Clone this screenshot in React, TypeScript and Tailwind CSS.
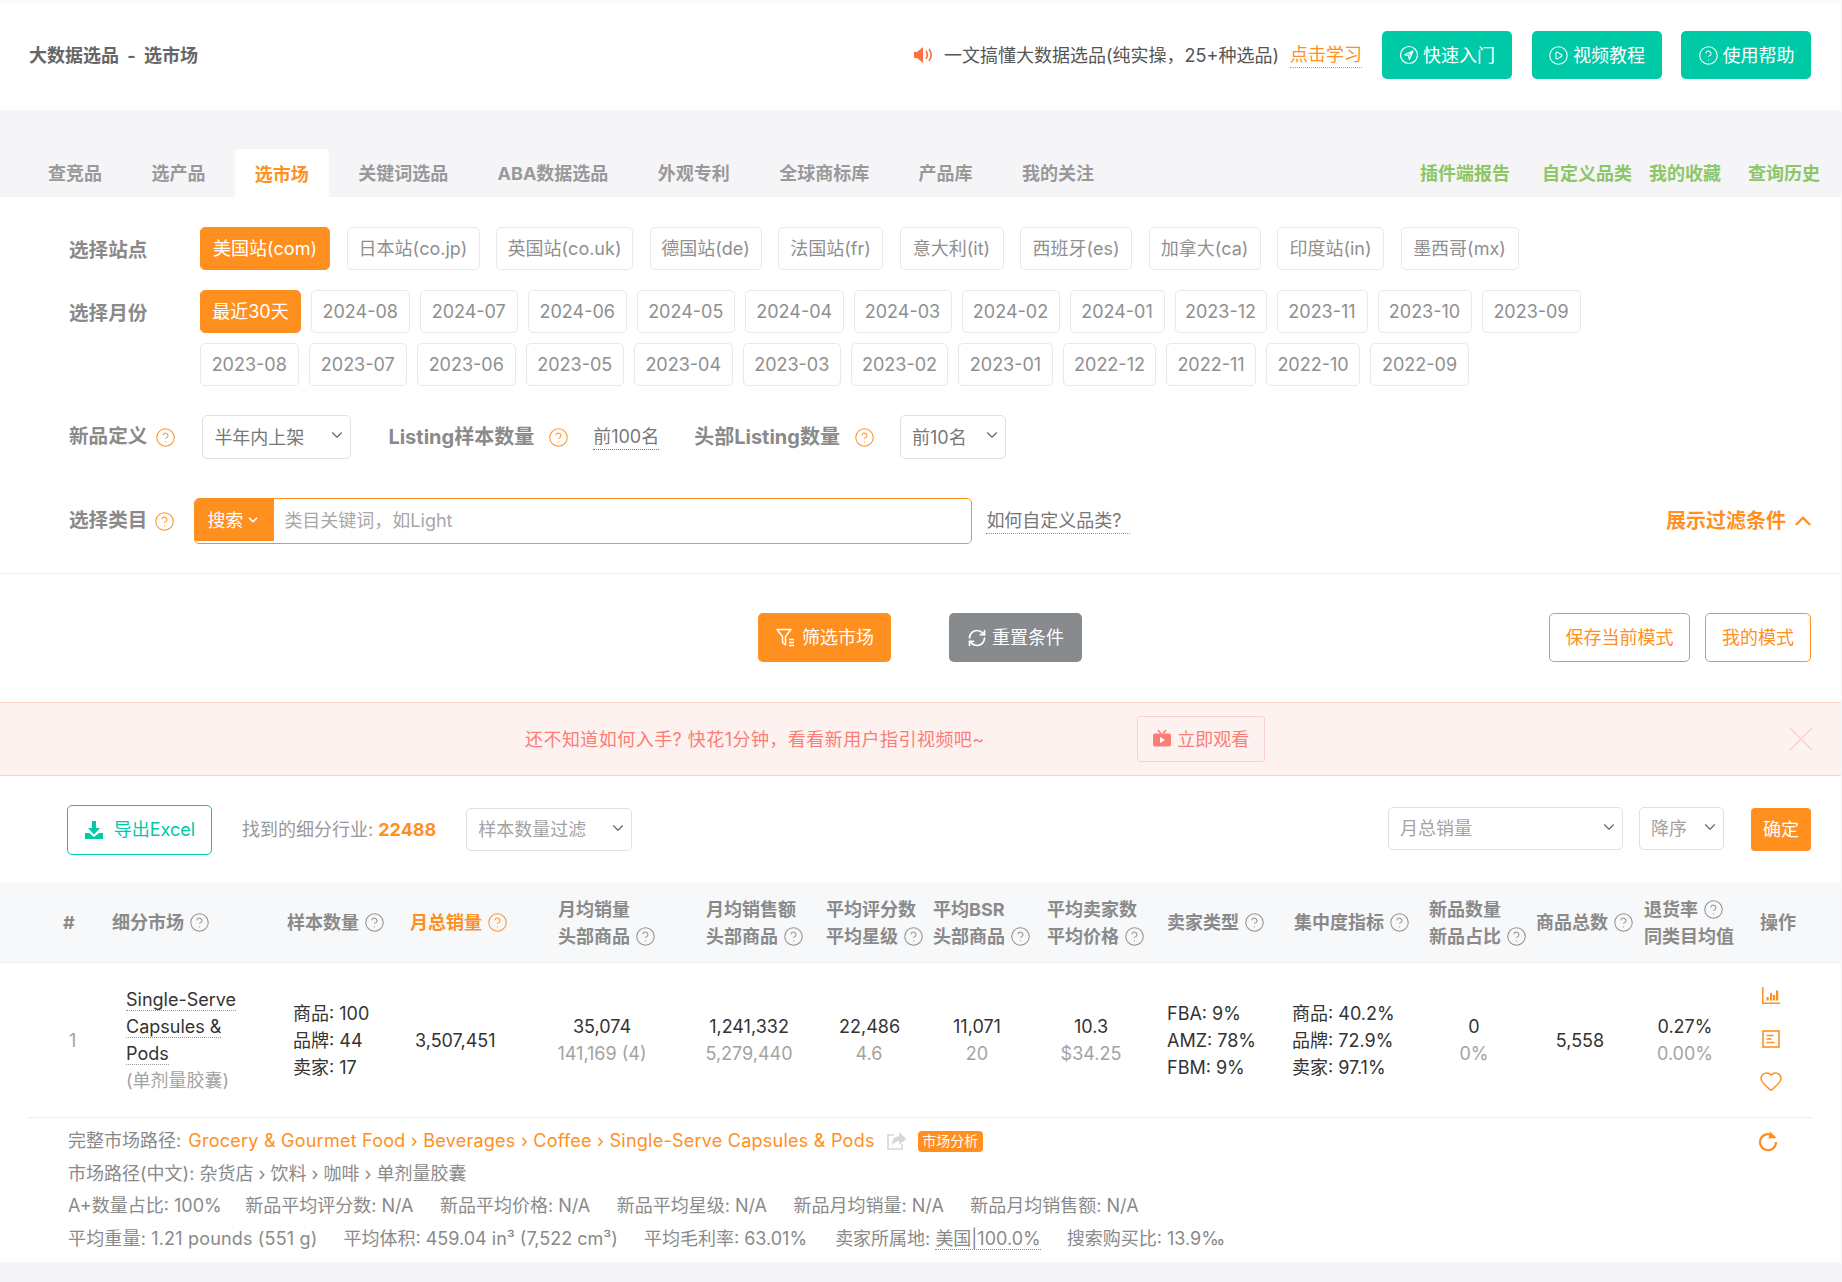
import { ChevronDown, ChevronUp, CircleHelp, CirclePlay, Heart, RefreshCw, X } from "lucide-react";

const tabs = ["查竞品", "选产品", "选市场", "关键词选品", "ABA数据选品", "外观专利", "全球商标库", "产品库", "我的关注"];
const sites = [
  { label: "美国站(com)", w: "w-[130px]" },
  { label: "日本站(co.jp)", w: "w-[133px]" },
  { label: "英国站(co.uk)", w: "w-[137px]" },
  { label: "德国站(de)", w: "w-[112px]" },
  { label: "法国站(fr)", w: "w-[105px]" },
  { label: "意大利(it)", w: "w-[104px]" },
  { label: "西班牙(es)", w: "w-[112px]" },
  { label: "加拿大(ca)", w: "w-[112px]" },
  { label: "印度站(in)", w: "w-[107px]" },
  { label: "墨西哥(mx)", w: "w-[118px]" },
];
const monthsA = [
  { label: "最近30天", w: "w-[101px]" },
  { label: "2024-08", w: "w-[98.5px]" },
  { label: "2024-07", w: "w-[98.5px]" },
  { label: "2024-06", w: "w-[98.5px]" },
  { label: "2024-05", w: "w-[98.5px]" },
  { label: "2024-04", w: "w-[98.5px]" },
  { label: "2024-03", w: "w-[98px]" },
  { label: "2024-02", w: "w-[98px]" },
  { label: "2024-01", w: "w-[95px]" },
  { label: "2023-12", w: "w-[92px]" },
  { label: "2023-11", w: "w-[91px]" },
  { label: "2023-10", w: "w-[94px]" },
  { label: "2023-09", w: "w-[99px]" },
];
const monthsB = [
  { label: "2023-08", w: "w-[98.5px]" },
  { label: "2023-07", w: "w-[98.5px]" },
  { label: "2023-06", w: "w-[98.5px]" },
  { label: "2023-05", w: "w-[98.5px]" },
  { label: "2023-04", w: "w-[98.5px]" },
  { label: "2023-03", w: "w-[98.5px]" },
  { label: "2023-02", w: "w-[97px]" },
  { label: "2023-01", w: "w-[95px]" },
  { label: "2022-12", w: "w-[93px]" },
  { label: "2022-11", w: "w-[90px]" },
  { label: "2022-10", w: "w-[94px]" },
  { label: "2022-09", w: "w-[99px]" },
];

function Help({ orange }: { orange?: boolean }) {
  return (
    <CircleHelp
      size={21}
      strokeWidth={1.15}
      className={orange ? "shrink-0 text-[#ff8f1f]" : "shrink-0 text-[#8f8f8f]"}
    />
  );
}

function Pill({ label, w, active }: { label: string; w: string; active?: boolean }) {
  return (
    <div
      className={
        active
          ? "h-[43px] flex items-center justify-center rounded-[5px] border border-[#ff8f1f] bg-[#ff8f1f] text-white " + w
          : "h-[43px] flex items-center justify-center rounded-[5px] border border-[#e8e8e8] bg-white text-[#8f8f8f] " + w
      }
    >
      {label}
    </div>
  );
}

function Select({ label, className }: { label: string; className: string }) {
  return (
    <div className={"flex items-center justify-between pl-[11px] pr-[4px] rounded-[5px] border border-[#e0e0e0] " + className}>
      <span>{label}</span>
      <ChevronDown size={18} strokeWidth={1.5} className="text-[#666666] mb-[4px]" />
    </div>
  );
}

function HeadCell({ lines, orange }: { lines: [string, boolean][]; orange?: boolean }) {
  return (
    <div className={orange ? "text-[#ff8f1f]" : ""}>
      {lines.map(([text, help]) => (
        <div key={text} className="flex items-center gap-[5px] whitespace-nowrap h-[27px]">
          {text}
          {help && <Help orange={orange} />}
        </div>
      ))}
    </div>
  );
}

function Two({ top, bottom, className }: { top: string; bottom: string; className: string }) {
  return (
    <div className={"text-center " + className}>
      <div>{top}</div>
      <div className="text-[#a3a3a3]">{bottom}</div>
    </div>
  );
}

export default function App() {
  return (
    <div className="w-[1842px] h-[1282px] pr-[1px] overflow-hidden bg-[#f5f5f7] text-[18px] font-['Inter','Noto_Sans_CJK_SC',sans-serif]">
      {/* page header */}
      <header className="h-[110px] bg-white bg-linear-to-b from-[#f7f8f8] to-white to-[5px] flex items-center justify-between pl-[29px] pr-[30px]">
        <div className="font-bold text-[#666666]">
          大数据选品<span className="mx-[4px]"> - </span>选市场
        </div>
        <div className="flex items-center">
          <svg width="20" height="20" viewBox="0 0 20 20" className="mr-[11px]">
            <path d="M1 7h3l6-5v16l-6-5H1z" fill="#ff7043" />
            <path d="M13 6c1.600 2.400 1.600 5.600 0 8M16 4c2.600 3.600 2.600 8.400 0 12" fill="none" stroke="#ff7043" strokeWidth="1.600" />
          </svg>
          <span className="text-[#555555]">一文搞懂大数据选品(纯实操，25+种选品)</span>
          <span className="ml-[11px] mr-[20px] text-[#ff8f1f] border-b border-dotted border-[#ff8f1f] leading-[24px]">点击学习</span>
          <div className="flex gap-[19.5px]">
            <div className="w-[130px] h-[48px] rounded-[5px] bg-[#00c9a7] text-white flex items-center justify-center gap-[4px]">
              <svg width="20" height="20" viewBox="0 0 20 20" fill="none" stroke="white" strokeWidth="1.200">
                <circle cx="10" cy="10" r="8.500" />
                <path d="M14 6 5.800 9.800l3.700.9.800 3.700zM14 6 9.500 10.700" strokeLinejoin="round" />
              </svg>
              快速入门
            </div>
            <div className="w-[130px] h-[48px] rounded-[5px] bg-[#00c9a7] text-white flex items-center justify-center gap-[4px]">
              <CirclePlay size={21} strokeWidth={1.2} />
              视频教程
            </div>
            <div className="w-[130px] h-[48px] rounded-[5px] bg-[#00c9a7] text-white flex items-center justify-center gap-[4px]">
              <CircleHelp size={21} strokeWidth={1.2} />
              使用帮助
            </div>
          </div>
        </div>
      </header>

      {/* tabs */}
      <nav className="h-[87px] flex items-end pl-[28px] font-bold text-[#999999]">
        <div className="flex gap-[9.4px]">
          {tabs.map((tab) =>
            tab === "选市场" ? (
              <div key={tab} className="h-[48px] px-[20px] pt-[12px] rounded-t-[4px] bg-white text-[#ff8f1f]">
                {tab}
              </div>
            ) : (
              <div key={tab} className="h-[48px] px-[20px] pt-[11px]">
                {tab}
              </div>
            ),
          )}
        </div>
        <div className="ml-auto pr-[21px] h-[48px] pt-[11px] flex text-[#8cc665]">
          <span>插件端报告</span>
          <span className="ml-[32px]">自定义品类</span>
          <span className="ml-[17px]">我的收藏</span>
          <span className="ml-[27px]">查询历史</span>
        </div>
      </nav>

      {/* filters */}
      <section className="bg-white pt-[30px]">
        <div className="flex">
          <div className="w-[200px] pl-[69px] pt-[9px] text-[19.6px] font-bold text-[#8a8a8a]">选择站点</div>
          <div className="flex gap-[16.500px]">
            {sites.map((site, i) => (
              <Pill key={site.label} label={site.label} w={site.w} active={i === 0} />
            ))}
          </div>
        </div>
        <div className="flex mt-[20px]">
          <div className="w-[200px] pl-[69px] pt-[9px] text-[19.6px] font-bold text-[#8a8a8a]">选择月份</div>
          <div className="flex flex-col gap-[10px]">
            <div className="flex gap-[10px]">
              {monthsA.map((m, i) => (
                <Pill key={m.label} label={m.label} w={m.w} active={i === 0} />
              ))}
            </div>
            <div className="flex gap-[10px]">
              {monthsB.map((m) => (
                <Pill key={m.label} label={m.label} w={m.w} />
              ))}
            </div>
          </div>
        </div>

        <div className="flex items-center mt-[29px] pl-[69px] h-[44px] text-[#8a8a8a]">
          <span className="text-[19.6px] font-bold">新品定义</span>
          <span className="ml-[8px] flex"><Help orange /></span>
          <Select label="半年内上架" className="ml-[26px] w-[149px] h-[44px] text-[#777777]" />
          <span className="ml-[37px] text-[20px] font-bold">Listing样本数量</span>
          <span className="ml-[14px] flex"><Help orange /></span>
          <span className="ml-[24px] text-[#777777] border-b border-dotted border-[#777777] leading-[24px]">前100名</span>
          <span className="ml-[35px] text-[20px] font-bold">头部Listing数量</span>
          <span className="ml-[14px] flex"><Help orange /></span>
          <Select label="前10名" className="ml-[25px] w-[106px] h-[44px] text-[#777777]" />
        </div>

        <div className="flex items-center mt-[39px] pl-[69px] pr-[25px] h-[46px] text-[#8a8a8a]">
          <span className="text-[19.6px] font-bold">选择类目</span>
          <span className="ml-[7px] flex"><Help orange /></span>
          <div className="ml-[19px] w-[778px] h-[46px] flex rounded-[5px] border border-[#ff8f1f] overflow-hidden">
            <div className="w-[79px] bg-[#ff8f1f] text-white flex items-center pl-[12px] gap-[3px] mb-[2px]">
              搜索
              <ChevronDown size={14} strokeWidth={3} />
            </div>
            <input
              className="flex-1 pl-[10px] pb-[2px] outline-none text-[#555555] placeholder:text-[#a8a8a8]"
              placeholder="类目关键词，如Light"
            />
          </div>
          <span className="ml-[14px] pr-[8px] text-[#777777] border-b border-dotted border-[#999999] leading-[24px]">如何自定义品类?</span>
          <span className="ml-auto text-[20px] font-bold text-[#ff8f1f]">展示过滤条件</span>
          <ChevronUp size={26} strokeWidth={2.2} className="ml-[4px] text-[#ff8f1f]" />
        </div>

        <div className="mt-[29px] border-t border-[#eeeeee] pt-[39px] pb-[40px] grid grid-cols-[1fr_auto_1fr]">
          <div />
          <div className="flex gap-[58px] mr-[1px]">
            <div className="w-[133px] h-[49px] rounded-[5px] bg-[#ff8f1f] text-white flex items-center justify-center gap-[5px]">
              <svg width="22" height="22" viewBox="0 0 22 22" fill="none" stroke="white" strokeWidth="1.500">
                <path d="M2 2.500h14l-5.500 7v8.500l-3-2.500v-6z" strokeLinejoin="round" />
                <path d="M14 12.500h5M14 15.500h5M14 18.500h5" />
              </svg>
              筛选市场
            </div>
            <div className="w-[133px] h-[49px] rounded-[5px] bg-[#888b8e] text-white flex items-center justify-center gap-[5px]">
              <RefreshCw size={20} strokeWidth={2} />
              重置条件
            </div>
          </div>
          <div className="flex justify-end gap-[15px] pr-[30px] text-[#ff8f1f]">
            <div className="w-[141px] h-[49px] rounded-[5px] border border-[#ff8f1f] flex items-center justify-center">保存当前模式</div>
            <div className="w-[106px] h-[49px] rounded-[5px] border border-[#ff8f1f] flex items-center justify-center">我的模式</div>
          </div>
        </div>
      </section>

      {/* notice */}
      <div className="h-[74px] bg-[#fef2f1] border-y border-[#fbd0cc] flex items-center pl-[525px] pr-[19px] text-[#fb7d74]">
        <span className="tracking-[0.45px]">还不知道如何入手? 快花1分钟，看看新用户指引视频吧~</span>
        <div className="ml-[152px] w-[128px] h-[46px] rounded-[3px] border border-[#fbd0cc] flex items-center justify-center gap-[5px]">
          <svg width="20" height="20" viewBox="0 0 20 20">
            <path d="M1 6.500a2 2 0 0 1 2-2h14a2 2 0 0 1 2 2v9a2 2 0 0 1-2 2H3a2 2 0 0 1-2-2z" fill="#fb7d74" />
            <path d="M6 1l3 3.500M14 1l-3 3.500" stroke="#fb7d74" strokeWidth="1.500" />
            <path d="M8 8v6l5-3z" fill="white" />
          </svg>
          立即观看
        </div>
        <X size={42} strokeWidth={0.9} className="ml-auto text-[#fbd0cc]" />
      </div>

      {/* toolbar */}
      <div className="h-[107px] bg-white flex items-center pl-[67px] pr-[30px] text-[#999999]">
        <div className="w-[145px] h-[50px] rounded-[5px] border border-[#00c9a7] text-[#00c9a7] flex items-center justify-center gap-[10px]">
          <svg width="20" height="20" viewBox="0 0 20 20" fill="#00c9a7">
            <path d="M8 1h4v7h4l-6 6.500L4 8h4z" />
            <path d="M1 13h4l5 4 5-4h4v6H1z" />
          </svg>
          导出Excel
        </div>
        <span className="ml-[30px]">
          找到的细分行业: <b className="text-[#ff8f1f]">22488</b>
        </span>
        <Select label="样本数量过滤" className="ml-[30px] w-[166px] h-[43px] text-[#a3a3a3]" />
        <Select label="月总销量" className="ml-auto mb-[2px] w-[235px] h-[43px] text-[#a3a3a3]" />
        <Select label="降序" className="ml-[16px] mb-[2px] w-[85px] h-[43px] text-[#a3a3a3]" />
        <div className="ml-[27px] w-[60px] h-[43px] rounded-[4px] bg-[#ff8f1f] text-white flex items-center justify-center">确定</div>
      </div>

      {/* table */}
      <div className="h-[80px] bg-[#f7f8fa] border-b border-[#eeeeee] pl-[63px] font-bold text-[#8a8a8a] leading-[27px] items-center grid grid-cols-[49px_175px_123px_148px_148px_120px_107px_114px_120px_127px_135px_107px_108px_116px_81px]">
        <div>#</div>
        <HeadCell lines={[["细分市场", true]]} />
        <HeadCell lines={[["样本数量", true]]} />
        <HeadCell orange lines={[["月总销量", true]]} />
        <HeadCell lines={[["月均销量", false], ["头部商品", true]]} />
        <HeadCell lines={[["月均销售额", false], ["头部商品", true]]} />
        <HeadCell lines={[["平均评分数", false], ["平均星级", true]]} />
        <HeadCell lines={[["平均BSR", false], ["头部商品", true]]} />
        <HeadCell lines={[["平均卖家数", false], ["平均价格", true]]} />
        <HeadCell lines={[["卖家类型", true]]} />
        <HeadCell lines={[["集中度指标", true]]} />
        <HeadCell lines={[["新品数量", false], ["新品占比", true]]} />
        <HeadCell lines={[["商品总数", true]]} />
        <HeadCell lines={[["退货率", true], ["同类目均值", false]]} />
        <div>操作</div>
      </div>

      <div className="bg-white leading-[27px] text-[#333333]">
        <div className="h-[154px] flex items-center pl-[69px]">
          <div className="w-[57px] text-[#a3a3a3]">1</div>
          <div className="w-[167px]">
            <div><span className="border-b border-dotted border-[#999999]">Single-Serve</span></div>
            <div><span className="border-b border-dotted border-[#999999]">Capsules &amp;</span></div>
            <div><span className="border-b border-dotted border-[#999999]">Pods</span></div>
            <div className="text-[#a3a3a3]">(单剂量胶囊)</div>
          </div>
          <div className="w-[122px]">
            <div>商品: 100</div>
            <div>品牌: 44</div>
            <div>卖家: 17</div>
          </div>
          <div className="w-[130px]">3,507,451</div>
          <Two top="35,074" bottom="141,169 (4)" className="w-[114px]" />
          <Two top="1,241,332" bottom="5,279,440" className="w-[180px]" />
          <Two top="22,486" bottom="4.6" className="w-[60px]" />
          <Two top="11,071" bottom="20" className="w-[156px]" />
          <Two top="10.3" bottom="$34.25" className="w-[72px]" />
          <div className="w-[165px] pl-[40px]">
            <div>FBA: 9%</div>
            <div>AMZ: 78%</div>
            <div>FBM: 9%</div>
          </div>
          <div className="w-[128px]">
            <div>商品: 40.2%</div>
            <div>品牌: 72.9%</div>
            <div>卖家: 97.1%</div>
          </div>
          <Two top="0" bottom="0%" className="w-[108px]" />
          <div className="w-[104px] text-center">5,558</div>
          <Two top="0.27%" bottom="0.00%" className="w-[106px]" />
          <div className="ml-[21px] flex flex-col items-center gap-[25px] text-[#ff8f1f]">
            <svg width="18" height="18" viewBox="0 0 18 18" fill="#ff8f1f">
              <path d="M0 0h1.500v15.500H18V17H0z" />
              <path d="M4.500 10h2.200v3.500H4.500zM8 6h2.200v7.500H8zM11 8h2.200v5.500H11zM14 3.500h2.200v10H14z" />
            </svg>
            <svg width="18" height="18" viewBox="0 0 18 18" fill="none" stroke="#ff8f1f" strokeWidth="1.600">
              <rect x="1" y="1" width="16" height="16" />
              <path d="M4.500 5.500h7M4.500 9h5M4.500 12.500h8" />
            </svg>
            <Heart size={24} strokeWidth={1.5} className="mt-[-4px]" />
          </div>
        </div>

        <div className="ml-[28px] mr-[29px] border-t border-[#eeeeee]" />

        <div className="h-[144px] pt-[7px] pl-[68px] pr-[29px] text-[#8a8a8a] leading-[32.5px]">
          <div className="flex items-center">
            <span className="whitespace-pre mr-[2px]">完整市场路径: </span>
            <span className="text-[#ff8f1f] tracking-[0.24px]">Grocery &amp; Gourmet Food › Beverages › Coffee › Single-Serve Capsules &amp; Pods</span>
            <svg width="20" height="20" viewBox="0 0 20 20" fill="none" stroke="#d6d6d6" strokeWidth="1.600" className="ml-[11px]">
              <path d="M8 4H2v14h14v-5" />
              <path d="M7 12c0-4 3-6 7-6V3l5 5-5 4V9c-3 0-5 1-7 3z" fill="#d6d6d6" />
            </svg>
            <span className="ml-[12px] w-[65px] h-[21px] rounded-[4px] bg-[#ff8f1f] text-white text-[14px] flex items-center justify-center">市场分析</span>
            <svg width="22" height="22" viewBox="0 0 22 22" fill="none" className="ml-auto mr-[33px]">
              <path d="M17.500 7.500A8 8 0 1 0 19 12" stroke="#ff8f1f" strokeWidth="2.200" />
              <path d="M13 1.500l6.500 6.500-8 .6z" fill="#ff8f1f" />
            </svg>
          </div>
          <div>市场路径(中文): 杂货店 › 饮料 › 咖啡 › 单剂量胶囊</div>
          <div className="flex gap-[26.5px]">
            <span className="mr-[-3px]">A+数量占比: 100%</span>
            <span>新品平均评分数: N/A</span>
            <span>新品平均价格: N/A</span>
            <span>新品平均星级: N/A</span>
            <span>新品月均销量: N/A</span>
            <span>新品月均销售额: N/A</span>
          </div>
          <div className="flex gap-[26px]">
            <span className="tracking-[0.17px]">平均重量: 1.21 pounds (551 g)</span>
            <span>平均体积: 459.04 in³ (7,522 cm³)</span>
            <span>平均毛利率: 63.01%</span>
            <span className="ml-[2px]">
              卖家所属地: <span className="border-b border-dotted border-[#8a8a8a]">美国|100.0%</span>
            </span>
            <span>搜索购买比: 13.9‰</span>
          </div>
        </div>
      </div>
    </div>
  );
}
